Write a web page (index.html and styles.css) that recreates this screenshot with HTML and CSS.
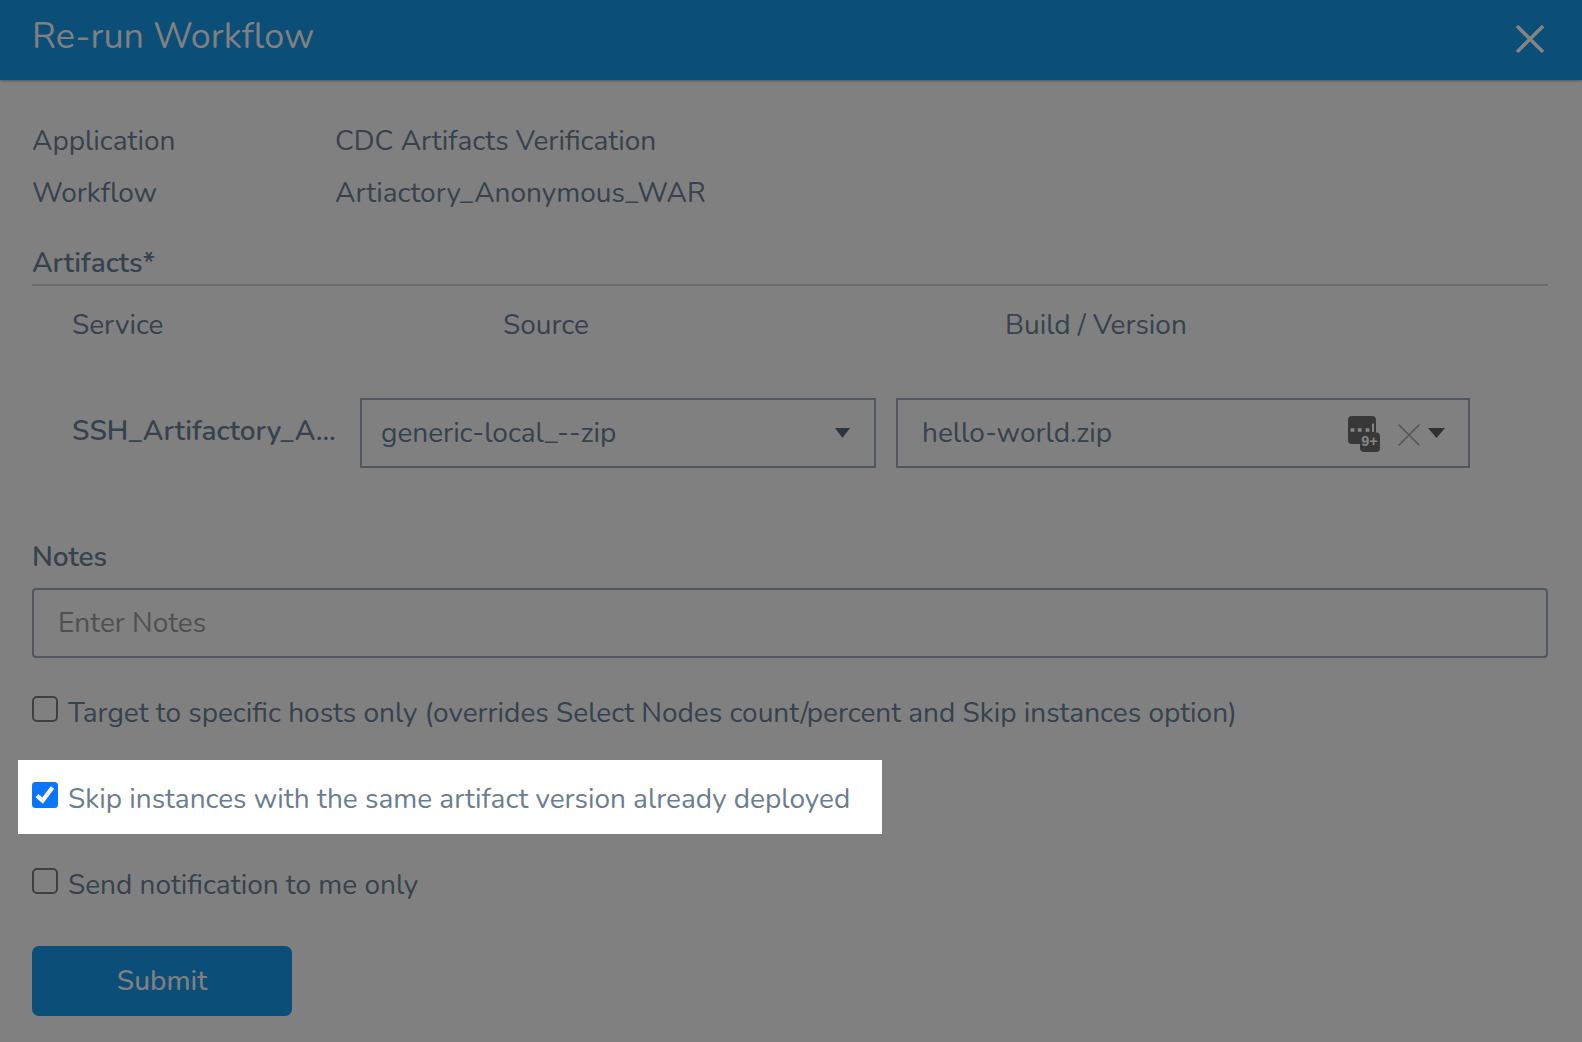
FILE: index.html
```html
<!DOCTYPE html>
<html lang="en">
<head>
<meta charset="utf-8">
<title>Re-run Workflow</title>
<link rel="stylesheet" href="styles.css">
</head>
<body>
<div class="modal">
  <header class="modal-header">
    <h1 class="title">Re-run Workflow</h1>
    <svg class="close" width="28" height="28" viewBox="0 0 28 28"><path d="M1 1L27 27M27 1L1 27"/></svg>
  </header>
  <main class="modal-body">
    <dl class="details">
      <dt>Application</dt><dd>CDC Artifacts Verification</dd>
      <dt>Workflow</dt><dd>Artiactory_Anonymous_WAR</dd>
    </dl>
    <h2 class="section">Artifacts*</h2>
    <div class="columns">
      <span>Service</span><span>Source</span><span>Build / Version</span>
    </div>
    <div class="artifact">
      <div class="service-name">SSH_Artifactory_A...</div>
      <div class="field source"><span>generic-local_--zip</span>
        <svg class="caret" width="15" height="10" viewBox="0 0 15 10"><path d="M0 0H15L7.5 10Z"/></svg>
      </div>
      <div class="field build"><span>hello-world.zip</span>
        <svg class="manager" width="32" height="36" viewBox="0 0 32 36">
          <rect width="28" height="28" rx="4"/><rect x="12" y="16.5" width="20" height="19.5" rx="4"/>
          <path class="dots" d="M2.6 12.2h3.8v3.6H2.6zM9.8 12.2h3.8v3.6H9.8zM17.6 12.2h3.8v3.6H17.6zM24 7.5h2v8.5H24z"/>
          <text x="13.2" y="30.4">9+</text>
        </svg>
        <svg class="clear" width="22" height="22" viewBox="0 0 22 22"><path d="M.5 .5L21.5 21.5M21.5 .5L.5 21.5"/></svg>
        <svg class="caret dark" width="17" height="10" viewBox="0 0 17 10"><path d="M0 0H17L8.5 10Z"/></svg>
      </div>
    </div>
    <div class="notes-label">Notes</div>
    <div class="notes">Enter Notes</div>
    <div class="check"><i class="box"></i><span>Target to specific hosts only (overrides Select Nodes count/percent and Skip instances option)</span></div>
    <div class="check highlight"><svg class="box-on" width="26" height="26" viewBox="0 0 26 26"><rect width="26" height="26" rx="3.5"/><path d="M5 13.6L10.6 18.6L20.5 5.4"/></svg><span>Skip instances with the same artifact version already deployed</span></div>
    <div class="check"><i class="box"></i><span>Send notification to me only</span></div>
    <button class="submit">Submit</button>
  </main>
</div>
</body>
</html>
```
FILE: styles.css
```css
* { box-sizing: border-box; }
body {
  margin: 0;
  background: #808080;
  color: #36424e;
  font: 400 28px/40px Nunito, "Noto Sans", sans-serif;
}
h1, h2, dl, dd { margin: 0; font-weight: inherit; font-size: inherit; }
svg { display: block; flex: none; }
.modal { width: 1582px; height: 1042px; overflow: hidden; white-space: nowrap; }
.modal-header {
  height: 80px;
  padding: 0 38px 0 32px;
  display: flex;
  justify-content: space-between;
  background: #0b4e78;
  box-shadow: 0 1px 2px rgba(60, 60, 75, .6);
}
.title { font-size: 36px; line-height: 40px; padding-top: 17px; color: #808080; }
.close { margin-top: 25px; stroke: #858585; stroke-width: 3.4; }
.modal-body { padding: 41px 34px 0 32px; display: flex; flex-direction: column; }
.details { display: grid; grid-template-columns: 303px 1fr; row-gap: 12px; }
.section { height: 43px; margin-top: 30px; font-weight: 600; border-bottom: 2px solid #696e73; }
.columns { display: grid; grid-template-columns: 431px 502px 1fr; margin-top: 19px; padding-left: 40px; }
.artifact { display: flex; margin-top: 53px; padding-left: 40px; height: 70px; }
.service-name { width: 288px; padding-top: 13px; font-weight: 600; }
.field { display: flex; align-items: center; border: 2px solid #50575f; height: 70px; }
.source { width: 516px; padding-left: 19px; padding-right: 24px; }
.build { width: 574px; margin-left: 20px; padding-left: 24px; padding-right: 23px; }
.caret { fill: #2c3641; margin: 0 0 1px auto; }
.dark { fill: #303030; margin-left: 8px; }
.manager { margin: 1px 0 0 auto; fill: #383838; }
.manager .dots, .manager text { fill: #858585; }
.manager text { font: 700 14.5px "Liberation Sans", sans-serif; }
.clear { margin: 3px 0 0 18px; stroke: #555; stroke-width: 1.5; }
.notes-label { margin-top: 69px; font-weight: 600; }
.notes { height: 70px; margin-top: 11px; padding: 13px 24px; border: 2px solid #50575f; border-radius: 4px; color: #505050; }
.check { display: flex; gap: 10px; margin-top: 35px; height: 40px; }
.box { flex: none; width: 26px; height: 26px; margin-top: 3px; border: 2px solid #404040; border-radius: 5px; }
.highlight { width: 864px; height: 74px; margin: 27px 0 -4px -14px; padding: 19px 14px; background: #fff; color: #6b7d90; }
.box-on { margin-top: 3px; fill: #0a75ff; }
.box-on path { fill: none; stroke: #fff; stroke-width: 4.2; }
.submit { width: 260px; height: 70px; margin-top: 41px; padding: 0; border: 0; border-radius: 7px; background: #0b4e78; color: #808080; font: inherit; font-weight: 500; }
```
